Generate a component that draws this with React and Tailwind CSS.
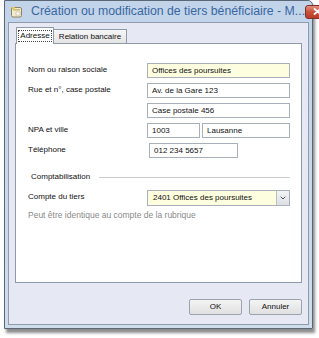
import { ChevronDown } from 'lucide-react';

// Dialogue "Création ou modification de tiers bénéficiaire"

function Field({ value, width = 'w-[143px]', yellow = false }) {
  return (
    <div
      className={`${width} h-[15px] border border-[#a9b0ba] px-[4px] flex items-center text-[8px] text-[#111] ${
        yellow ? 'bg-[#fdfddf]' : 'bg-white'
      }`}
    >
      {value}
    </div>
  );
}

function Row({ label, children }) {
  return (
    <div className="flex items-start">
      <div className="w-[121px] pt-[2px] text-[8px] text-[#111] leading-[10px]">{label}</div>
      <div className="flex gap-[2px]">{children}</div>
    </div>
  );
}

export default function App() {
  return (
    <div className="w-[319px] h-[338px] bg-white overflow-hidden" style={{ fontFamily: '"Liberation Sans", Arial, sans-serif' }}>
      <div className="ml-[4px] w-[309px] h-[329px] border border-[#5c6776] rounded-tr-[5px] bg-gradient-to-b from-[#c2d4ea] to-[#cfdcec] flex flex-col shadow-[2px_4px_3px_rgba(0,0,0,0.45)]">
        {/* barre de titre */}
        <div className="h-[21px] flex items-center pl-[5px] pr-[3px] shrink-0">
          <svg width="13" height="12" viewBox="0 0 13 12" className="shrink-0">
            <rect x="1.5" y="1.5" width="10" height="9.5" rx="1.5" fill="#f3ecd0" stroke="#8b8364" />
            <rect x="3" y="3" width="7" height="1.5" fill="#c9b77a" />
            <path d="M1 1 L5 1 L4 5 Z" fill="#e5c64d" />
            <rect x="6" y="6" width="4" height="3" fill="#fff" stroke="#b9ae86" strokeWidth="0.6" />
          </svg>
          <div className="ml-[8px] text-[12.3px] text-[#3a67a0] whitespace-nowrap leading-none flex-1">
            Création ou modification de tiers bénéficiaire - M...
          </div>
          <div className="w-[25px] h-[14px] rounded-[3px] border border-[#7d3226] bg-gradient-to-b from-[#e2907f] via-[#c8503a] to-[#b83c28] flex items-center justify-center shrink-0">
            <svg width="9" height="7" viewBox="0 0 9 7">
              <path d="M1.5 1 L7.5 6 M7.5 1 L1.5 6" stroke="#fff" strokeWidth="1.8" strokeLinecap="round" />
            </svg>
          </div>
        </div>

        {/* corps */}
        <div className="mx-[3px] mb-[3px] flex-1 bg-[#e6e8f3] border border-[#8f9cae] flex flex-col pl-[6px] pr-[6px] pt-[3px]">
          {/* onglets */}
          <div className="flex items-end h-[17px] pl-[1px]">
            <div className="h-[17px] w-[38px] bg-white border border-b-0 border-[#8e9aa8] flex items-center justify-center relative z-10 -mb-px">
              <span className="text-[8px] text-[#111] border border-dotted border-[#444] px-[1px] leading-[10px]">Adresse</span>
            </div>
            <div className="h-[14px] w-[73px] bg-gradient-to-b from-[#f6f6f6] to-[#e4e4e4] border border-l-0 border-b-0 border-[#8e9aa8] flex items-center justify-center">
              <span className="text-[8px] text-[#111] leading-[10px]">Relation bancaire</span>
            </div>
          </div>

          {/* panneau */}
          <div className="h-[240px] bg-white border border-[#8e9aa8] pl-[12px] pr-[11px] pt-[19px] flex flex-col">
            <div className="flex flex-col gap-[5px]">
              <Row label="Nom ou raison sociale">
                <Field value="Offices des poursuites" yellow />
              </Row>
              <Row label="Rue et n°, case postale">
                <Field value="Av. de la Gare 123" />
              </Row>
              <Row label="">
                <Field value="Case postale 456" />
              </Row>
              <Row label="NPA et ville">
                <Field value="1003" width="w-[53px]" />
                <Field value="Lausanne" width="w-[88px]" />
              </Row>
              <Row label="Téléphone">
                <Field value="012 234 5657" width="w-[89px]" />
              </Row>
            </div>

            <div className="flex items-center mt-[14px] pl-[3px]">
              <span className="text-[8px] text-[#111] leading-[10px]">Comptabilisation</span>
              <div className="flex-1 h-px bg-[#c9ccd2] ml-[9px]" />
            </div>

            <div className="mt-[8px]">
              <Row label="Compte du tiers">
                <div className="w-[143px] h-[16px] border border-[#a9b0ba] bg-[#fdfddf] flex items-center">
                  <span className="flex-1 pl-[5px] text-[8px] text-[#111]">2401 Offices des poursuites</span>
                  <div className="w-[13px] h-[14px] border-l border-[#b8bec6] bg-gradient-to-b from-[#f4f4f4] to-[#dcdfe4] flex items-center justify-center">
                    <ChevronDown size={8} strokeWidth={3} color="#4a5260" />
                  </div>
                </div>
              </Row>
            </div>

            <div className="mt-[4px] text-[8.5px] text-[#8a8a8a] leading-[10px]">
              Peut être identique au compte de la rubrique
            </div>
          </div>

          {/* boutons */}
          <div className="flex justify-end gap-[7px] mt-[16px]">
            <button className="w-[53px] h-[16px] border border-[#9aa3ae] rounded-[2px] bg-gradient-to-b from-[#f4f4f4] to-[#e0e0e0] text-[8px] text-[#111]">
              OK
            </button>
            <button className="w-[53px] h-[16px] border border-[#9aa3ae] rounded-[2px] bg-gradient-to-b from-[#f4f4f4] to-[#e0e0e0] text-[8px] text-[#111]">
              Annuler
            </button>
          </div>
        </div>
      </div>
    </div>
  );
}
